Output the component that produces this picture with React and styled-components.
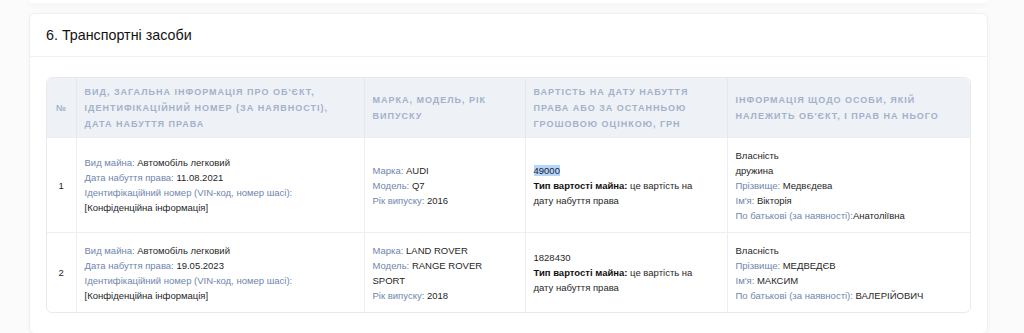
import React from "react";
import styled, { createGlobalStyle } from "styled-components";

const Global = createGlobalStyle`
  html, body { margin: 0; padding: 0; background: #fbfbfb; }
  body { font-family: "Liberation Sans", Arial, sans-serif; color: #1f1f1f; }
`;

const Page = styled.div`
  display: flex;
  flex-direction: column;
  gap: 10px;
  padding: 0 36px 0 29px;
`;

const PrevCard = styled.div`
  height: 3px;
  background: #fff;
  border-radius: 0 0 6px 6px;
  box-shadow: 0 2px 6px rgba(0, 0, 0, 0.05);
`;

const Card = styled.section`
  background: #fff;
  border: 1px solid #f0f0f0;
  border-radius: 6px;
  box-shadow: 0 1px 4px rgba(0, 0, 0, 0.03);
`;

const CardHeader = styled.div`
  padding: 13px 16px 12px;
  border-bottom: 1px solid #f0f0f0;
`;

const Title = styled.h2`
  margin: 0;
  font-size: 14.3px;
  font-weight: 400;
  line-height: 17px;
  color: #111;
`;

const CardBody = styled.div`
  padding: 20px 16px 20px 16px;
`;

const TableWrap = styled.div`
  border: 1px solid #e7ebf1;
  border-radius: 6px;
  overflow: hidden;
`;

const Table = styled.table`
  width: 100%;
  border-collapse: collapse;
  table-layout: fixed;
`;

const Th = styled.th`
  background: #eef2f7;
  color: #a3b1cb;
  font-size: 9px;
  font-weight: 700;
  letter-spacing: 1px;
  text-transform: uppercase;
  line-height: 16px;
  text-align: ${(p) => (p.$center ? "center" : "left")};
  padding: 5.5px 8px;
  border-left: 1px solid #e3e8ef;
  vertical-align: middle;
  &:first-child { border-left: none; padding: 5.5px 2px; }
`;

const Td = styled.td`
  font-size: 9.5px;
  line-height: 15px;
  color: #1f1f1f;
  padding: 9.5px 9px 9.5px 8px;
  border-left: 1px solid #ebeef2;
  border-top: 1px solid #ebeef2;
  text-align: ${(p) => (p.$center ? "center" : "left")};
  vertical-align: middle;
  &:first-child { border-left: none; padding-left: 2px; padding-right: 2px; }
`;

const Line = styled.div``;

const Label = styled.span`
  color: #6f86ae;
`;

const Strong = styled.b`
  font-weight: 700;
  color: #111;
`;

const Mark = styled.span`
  background: #b4d5fe;
`;

const rows = [
  {
    n: 1,
    date: "11.08.2021",
    make: "AUDI",
    model: "Q7",
    year: "2016",
    value: <Mark>49000</Mark>,
    owner: [
      ["", "Власність"],
      ["", "дружина"],
      ["Прізвище: ", "Медвєдева"],
      ["Ім'я: ", "Вікторія"],
      ["По батькові (за наявності):", "Анатоліївна"],
    ],
  },
  {
    n: 2,
    date: "19.05.2023",
    make: "LAND ROVER",
    model: (
      <>
        RANGE ROVER
        <br />
        SPORT
      </>
    ),
    year: "2018",
    value: "1828430",
    owner: [
      ["", "Власність"],
      ["Прізвище: ", "МЕДВЕДЄВ"],
      ["Ім'я: ", "МАКСИМ"],
      ["По батькові (за наявності): ", "ВАЛЕРІЙОВИЧ"],
    ],
  },
];

export default function App() {
  return (
    <>
      <Global />
      <Page>
        <PrevCard />
        <Card>
          <CardHeader>
            <Title>6. Транспортні засоби</Title>
          </CardHeader>
          <CardBody>
            <TableWrap>
              <Table>
                <colgroup>
                  <col style={{ width: 29 }} />
                  <col style={{ width: 288 }} />
                  <col style={{ width: 161 }} />
                  <col style={{ width: 202 }} />
                  <col />
                </colgroup>
                <thead>
                  <tr>
                    <Th $center>№</Th>
                    <Th>
                      Вид, загальна інформація про об'єкт,<br />
                      ідентифікаційний номер (за наявності),<br />
                      дата набуття права
                    </Th>
                    <Th>
                      Марка, модель, рік<br />випуску
                    </Th>
                    <Th>
                      Вартість на дату набуття<br />
                      права або за останньою<br />
                      грошовою оцінкою, грн
                    </Th>
                    <Th>
                      Інформація щодо особи, якій<br />
                      належить об'єкт, і прав на нього
                    </Th>
                  </tr>
                </thead>
                <tbody>
                  {rows.map((r) => (
                    <tr key={r.n}>
                      <Td $center>{r.n}</Td>
                      <Td>
                        <Line><Label>Вид майна: </Label>Автомобіль легковий</Line>
                        <Line><Label>Дата набуття права: </Label>{r.date}</Line>
                        <Line><Label>Ідентифікаційний номер (VIN-код, номер шасі):</Label></Line>
                        <Line>[Конфіденційна інформація]</Line>
                      </Td>
                      <Td>
                        <Line><Label>Марка: </Label>{r.make}</Line>
                        <Line><Label>Модель: </Label>{r.model}</Line>
                        <Line><Label>Рік випуску: </Label>{r.year}</Line>
                      </Td>
                      <Td>
                        <Line>{r.value}</Line>
                        <Line>
                          <Strong>Тип вартості майна:</Strong> це вартість на<br />
                          дату набуття права
                        </Line>
                      </Td>
                      <Td>
                        {r.owner.map(([l, v], i) => (
                          <Line key={i}>
                            {l && <Label>{l}</Label>}
                            {v}
                          </Line>
                        ))}
                      </Td>
                    </tr>
                  ))}
                </tbody>
              </Table>
            </TableWrap>
          </CardBody>
        </Card>
      </Page>
    </>
  );
}
